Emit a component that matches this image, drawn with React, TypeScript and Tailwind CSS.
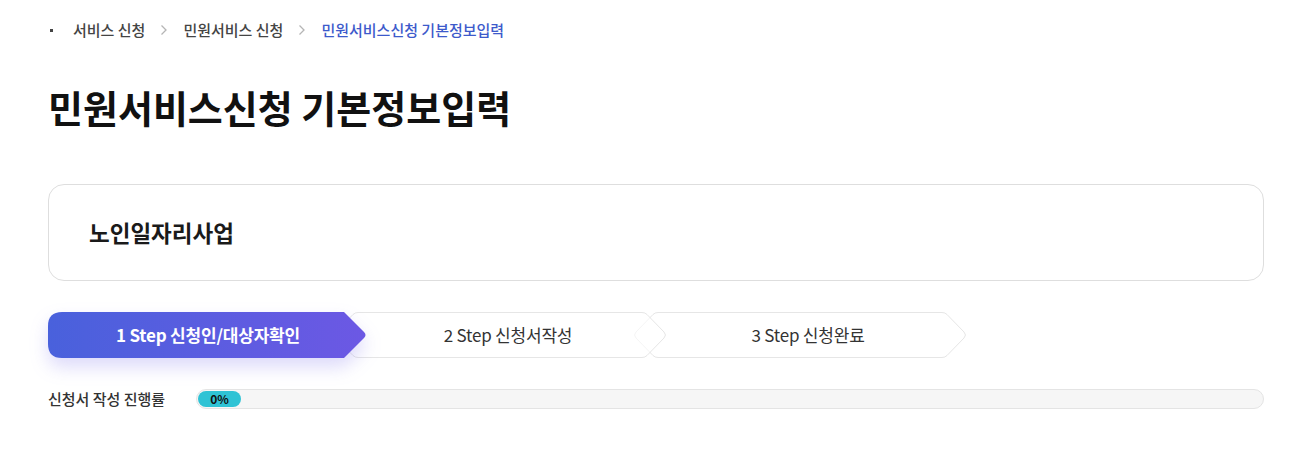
import React from 'react';

const font = { fontFamily: '"Noto Sans CJK KR", "Noto Sans", sans-serif' };

const steps = [
	{ label: '1 Step 신청인/대상자확인', active: true },
	{ label: '2 Step 신청서작성', active: false },
	{ label: '3 Step 신청완료', active: false },
];

const Chevron: React.FC = () => (
	<svg width="8" height="12" viewBox="0 0 8 12" className="mx-[15px]">
		<path d="M1.5 1.5 L6 6 L1.5 10.5" fill="none" stroke="#b5b5b5" strokeWidth="1.3" />
	</svg>
);

const StepShape: React.FC<{ active: boolean }> = ({ active }) => {
	if (active) {
		return (
			<svg
				width="320"
				height="46"
				viewBox="0 0 320 46"
				className="absolute left-0 top-0 overflow-visible drop-shadow-[0_9px_9px_rgba(98,86,230,0.22)]"
			>
				<defs>
					<linearGradient id="stepGrad" x1="0" y1="0" x2="1" y2="0">
						<stop offset="0%" stopColor="#4961dc" />
						<stop offset="100%" stopColor="#6c58e4" />
					</linearGradient>
				</defs>
				<path
					d="M14 0 L296 0 L316 20 Q319 23 316 26 L296 46 L14 46 Q0 46 0 32 L0 14 Q0 0 14 0 Z"
					fill="url(#stepGrad)"
				/>
			</svg>
		);
	}
	return (
		<svg width="320" height="46" viewBox="0 0 320 46" className="absolute left-0 top-0 overflow-visible">
			<path
				d="M10 0.5 L294 0.5 Q297 0.5 299 2.5 L316 20 Q319 23 316 26 L299 43.5 Q297 45.5 294 45.5 L10 45.5 Q7 45.5 5 43.5 L-12 26 Q-15 23 -12 20 L5 2.5 Q7 0.5 10 0.5 Z"
				fill="rgba(255,255,255,0.6)"
				stroke="#e6e6e6"
				strokeWidth="1"
			/>
		</svg>
	);
};

const App: React.FC = () => {
	return (
		<div className="min-h-screen bg-white px-12 pt-5" style={font}>
			{/* breadcrumb */}
			<div className="flex items-center h-5 text-[15px] font-medium text-[#444]">
				<span className="w-[3px] h-[3px] bg-[#444] ml-[2px] mr-[20px]" />
				<span>서비스 신청</span>
				<Chevron />
				<span>민원서비스 신청</span>
				<Chevron />
				<span className="text-[#3d5acb]">민원서비스신청 기본정보입력</span>
			</div>

			<h1 className="mt-[45px] text-[38px] leading-[44px] font-bold text-[#111]">
				민원서비스신청 기본정보입력
			</h1>

			<div className="mt-[55px] h-[97px] flex items-center border border-[#dedede] rounded-2xl pl-10">
				<span className="text-[22.5px] font-bold text-[#1a1a1a]">노인일자리사업</span>
			</div>

			{/* steps */}
			<div className="mt-[31px] flex">
				{steps.map((s, i) => (
					<div
						key={i}
						className={`relative w-[320px] h-[46px] flex items-center justify-center ${i > 0 ? '-ml-[20px]' : ''}`}
						style={{ zIndex: s.active ? 10 : 5 - i }}
					>
						<StepShape active={s.active} />
						<span
							className={`relative text-[17px] tracking-[-0.2px] ${
								s.active ? 'text-white font-bold' : 'text-[#333] font-normal'
							}`}
						>
							{s.label}
						</span>
					</div>
				))}
			</div>

			{/* progress */}
			<div className="mt-[30px] flex items-center">
				<span className="w-[148px] text-[15px] font-medium text-[#333]">신청서 작성 진행률</span>
				<div className="flex-1 h-[20px] rounded-full bg-[#f6f6f6] border border-[#e4e4e4] flex items-center px-[1px]">
					<div className="w-[43px] h-[16px] rounded-full bg-[#2fc3d5] flex items-center justify-center text-[12px] font-bold text-[#111]">
						0%
					</div>
				</div>
			</div>
		</div>
	);
};

export default App;
